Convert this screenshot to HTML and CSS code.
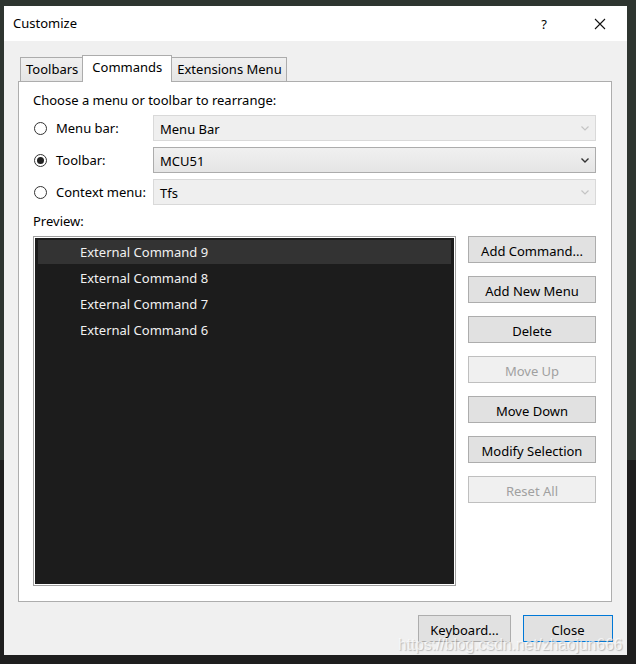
FILE: index.html
```html
<!DOCTYPE html>
<html>
<head>
<meta charset="utf-8">
<link rel="stylesheet" href="styles.css">
</head>
<body>
<div class="dialog">
  <div class="titlebar">
    <span class="title">Customize</span>
    <span class="help">?</span>
    <span class="close-x"><svg width="12" height="12" viewBox="0 0 12 12"><path d="M1 1L11 11M11 1L1 11" stroke="#111" stroke-width="1.1" fill="none"/></svg></span>
  </div>
  <div class="content">
    <div class="tabs">
      <div class="tab">Toolbars</div>
      <div class="tab active">Commands</div>
      <div class="tab">Extensions Menu</div>
    </div>
    <div class="panel">
      <div class="heading">Choose a menu or toolbar to rearrange:</div>
      <div class="rows">
        <div class="row">
          <span class="radio"></span><span class="rlabel">Menu bar:</span>
          <div class="combo disabled"><span>Menu Bar</span><svg class="chev" width="8" height="5" viewBox="0 0 8 5"><path d="M0.5 0.5L4 4L7.5 0.5" stroke="#c4c4c4" stroke-width="1.2" fill="none"/></svg></div>
        </div>
        <div class="row">
          <span class="radio checked"></span><span class="rlabel">Toolbar:</span>
          <div class="combo"><span>MCU51</span><svg class="chev" width="8" height="5" viewBox="0 0 8 5"><path d="M0.5 0.5L4 4L7.5 0.5" stroke="#333" stroke-width="1.4" fill="none"/></svg></div>
        </div>
        <div class="row">
          <span class="radio"></span><span class="rlabel">Context menu:</span>
          <div class="combo disabled"><span>Tfs</span><svg class="chev" width="8" height="5" viewBox="0 0 8 5"><path d="M0.5 0.5L4 4L7.5 0.5" stroke="#c4c4c4" stroke-width="1.2" fill="none"/></svg></div>
        </div>
      </div>
      <div class="preview-label">Preview:</div>
      <div class="main">
        <div class="list">
          <div class="item selected">External Command 9</div>
          <div class="item">External Command 8</div>
          <div class="item">External Command 7</div>
          <div class="item">External Command 6</div>
        </div>
        <div class="buttons">
          <div class="btn">Add Command...</div>
          <div class="btn">Add New Menu</div>
          <div class="btn">Delete</div>
          <div class="btn disabled">Move Up</div>
          <div class="btn">Move Down</div>
          <div class="btn">Modify Selection</div>
          <div class="btn disabled">Reset All</div>
        </div>
      </div>
    </div>
    <div class="footer">
      <div class="btn foot">Keyboard...</div>
      <div class="btn foot default">Close</div>
    </div>
  </div>
  <div class="watermark">https://blog.csdn.net/zhaojun666</div>
</div>
</body>
</html>
```

FILE: styles.css
```css
html, body {
  margin: 0;
  padding: 0;
}
body {
  width: 636px;
  height: 664px;
  overflow: hidden;
  background: linear-gradient(to bottom, #2e3530 0, #2e3530 460px, #1e1e1e 460px);
  font-family: "Noto Sans", "Open Sans", sans-serif;
  font-size: 13px;
  color: #000;
  padding-top: 6px;
  padding-left: 4px;
  box-sizing: border-box;
}
.dialog {
  position: relative;
  width: 623px;
  height: 649px;
  background: #f0f0f0;
  display: flex;
  flex-direction: column;
}
.titlebar {
  height: 35px;
  background: #fff;
  display: flex;
  align-items: center;
  padding-left: 9px;
  font-size: 13px;
}
.title {
  flex: 1;
  padding-bottom: 1px;
}
.help {
  width: 12px;
  margin-right: 44px;
  text-align: center;
}
.close-x {
  width: 12px;
  height: 12px;
  margin-right: 21px;
  display: flex;
}
.content {
  flex: 1;
  display: flex;
  flex-direction: column;
  padding: 14px 0 0 14px;
}
.tabs {
  display: flex;
  align-items: flex-end;
  height: 26px;
  padding-left: 2px;
}
.tab {
  height: 24px;
  box-sizing: border-box;
  border: 1px solid #acacac;
  border-bottom: none;
  background: linear-gradient(#f0f0f0, #e5e5e5);
  padding: 0 4px 0 5px;
  display: flex;
  align-items: center;
  line-height: 1;
  margin-right: -1px;
}
.tab.active {
  height: 27px;
  background: #fff;
  padding: 0 9px 3px 9px;
  position: relative;
  z-index: 1;
  margin-bottom: -1px;
}
.panel {
  width: 594px;
  height: 521px;
  box-sizing: border-box;
  background: #fff;
  border: 1px solid #adadad;
  padding: 9px 15px 0 14px;
  display: flex;
  flex-direction: column;
}
.heading {
  height: 18px;
  line-height: 18px;
}
.rows {
  margin-top: 6px;
  display: flex;
  flex-direction: column;
  gap: 6px;
}
.row {
  display: flex;
  align-items: center;
  height: 26px;
}
.radio {
  width: 13px;
  height: 13px;
  box-sizing: border-box;
  border: 1px solid #333;
  border-radius: 50%;
  margin-left: 1px;
  background: #fff;
  position: relative;
}
.radio.checked::after {
  content: "";
  position: absolute;
  left: 2px;
  top: 2px;
  width: 7px;
  height: 7px;
  border-radius: 50%;
  background: #222;
}
.rlabel {
  margin-left: 9px;
  width: 97px;
}
.combo {
  flex: 1;
  height: 26px;
  box-sizing: border-box;
  border: 1px solid #acacac;
  background: linear-gradient(#f0f0f0, #e5e5e5);
  display: flex;
  align-items: center;
  padding-left: 6px;
  padding-right: 6px;
}
.combo span {
  flex: 1;
  padding-top: 1px;
}
.combo.disabled {
  border-color: #d9d9d9;
  background: #efefef;
}
.preview-label {
  margin-top: 7px;
  height: 18px;
  line-height: 18px;
}
.main {
  margin-top: 6px;
  display: flex;
  gap: 12px;
}
.list {
  width: 423px;
  height: 350px;
  box-sizing: border-box;
  border: 1px solid #a0a0a0;
  box-shadow: inset 0 0 0 1px #fff;
  background: #1c1c1c;
  padding: 3px 4px;
  color: #f1f1f1;
}
.item {
  height: 26px;
  line-height: 26px;
  padding-left: 42px;
}
.item.selected {
  background: #333;
  height: 24px;
  line-height: 24px;
  margin-bottom: 1px;
}
.buttons {
  display: flex;
  flex-direction: column;
  gap: 13px;
  width: 128px;
}
.btn {
  height: 27px;
  box-sizing: border-box;
  border: 1px solid #adadad;
  background: #e1e1e1;
  display: flex;
  align-items: center;
  justify-content: center;
  padding-top: 2px;
}
.btn.disabled {
  border-color: #bfbfbf;
  background: #f0f0f0;
  color: #a0a0a0;
}
.footer {
  display: flex;
  justify-content: flex-end;
  gap: 12px;
  margin-top: 13px;
  padding-right: 14px;
}
.btn.foot {
  width: 93px;
}
.btn.default {
  width: 90px;
  border-color: #0078d7;
}
.watermark {
  position: absolute;
  left: 394px;
  top: 630px;
  font-family: "Liberation Sans", sans-serif;
  font-size: 15.6px;
  color: rgba(255, 255, 255, 0.7);
  text-shadow: 1px 1px 1px rgba(120, 120, 120, 0.45);
  pointer-events: none;
}
```
